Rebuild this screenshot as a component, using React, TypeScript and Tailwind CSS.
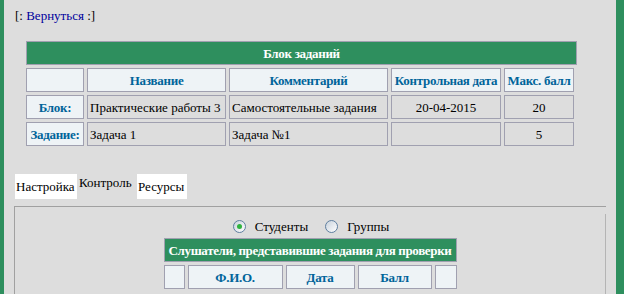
import React from "react";

function HeadCell({ children }: { children?: React.ReactNode }) {
  return (
    <div className="h-[24px] border border-[#a0a0b0] bg-[#eef3f6] flex items-center justify-center font-bold tracking-[-0.3px] text-[#00649a] whitespace-nowrap">
      {children}
    </div>
  );
}

function DataCell({
  children,
  center,
}: {
  children?: React.ReactNode;
  center?: boolean;
}) {
  return (
    <div
      className={`h-[24px] border border-[#a0a0b0] flex items-center whitespace-nowrap overflow-hidden ${
        center ? "justify-center" : "px-[2px]"
      }`}
    >
      {children}
    </div>
  );
}

function Radio({ checked }: { checked?: boolean }) {
  return (
    <span className="w-[13px] h-[13px] rounded-full border border-[#5f7fa0] bg-gradient-to-br from-[#c9d2dc] to-[#ffffff] flex items-center justify-center">
      {checked && <span className="w-[5px] h-[5px] rounded-full bg-[#2fb33f]" />}
    </span>
  );
}

export default function App() {
  return (
    <div className="min-h-[294px] bg-[#dddddd] flex text-[13px] leading-[15px] text-black font-['Liberation_Serif','Times_New_Roman',serif]">
      <div className="w-[4px] bg-[#2e8f5e] shrink-0" />
      <div className="flex-1 pt-[8px]">
        <div className="pl-[11px]">
          [: <a className="text-[#00009c]">Вернуться</a> :]
        </div>

        {/* Блок заданий */}
        <div className="ml-[22px] mt-[18px]">
          <div className="w-[551px] h-[24px] border border-[#a0a0b0] bg-[#2e8f5e] text-white font-bold tracking-[-0.3px] flex items-center justify-center mb-[3px]">
            Блок заданий
          </div>
          <div className="grid grid-cols-[58px_139px_159px_110px_70px] gap-[3px]">
            <HeadCell />
            <HeadCell>Название</HeadCell>
            <HeadCell>Комментарий</HeadCell>
            <HeadCell>Контрольная дата</HeadCell>
            <HeadCell>Макс. балл</HeadCell>

            <HeadCell>Блок:</HeadCell>
            <DataCell>Практические работы 3</DataCell>
            <DataCell>Самостоятельные задания</DataCell>
            <DataCell center>20-04-2015</DataCell>
            <DataCell center>20</DataCell>

            <HeadCell>Задание:</HeadCell>
            <DataCell>Задача 1</DataCell>
            <DataCell>Задача №1</DataCell>
            <DataCell center />
            <DataCell center>5</DataCell>
          </div>
        </div>

        {/* Вкладки */}
        <div className="ml-[11px] mt-[28px] flex items-start h-[25px]">
          <span className="bg-white w-[62px] h-[25px] pl-[1px] flex items-center">Настройка</span>
          <span className="w-[60px] h-[25px] pl-[2px] flex items-center -mt-[4px]">Контроль</span>
          <span className="bg-white w-[50px] h-[25px] pl-[1px] flex items-center">Ресурсы</span>
        </div>

        <div className="ml-[10px] mr-[10px] mt-[7px] border-t border-l border-[#a0a0a0] flex h-[89px] overflow-hidden">
          <div className="flex-1 flex flex-col items-center pt-[11px]">
            <div className="flex items-center h-[16px] ml-[2px]">
              <Radio checked />
              <span className="ml-[9px]">Студенты</span>
              <span className="ml-[17px]">
                <Radio />
              </span>
              <span className="ml-[9px]">Группы</span>
            </div>
            <div className="mt-[4px] w-[293px]">
              <div className="h-[24px] border border-[#a0a0b0] bg-[#2e8f5e] text-white font-bold tracking-[-0.35px] flex items-center justify-center mb-[3px] whitespace-nowrap">
                Слушатели, представившие задания для проверки
              </div>
              <div className="grid grid-cols-[21px_95px_69px_74px_22px] gap-[3px]">
                <HeadCell />
                <HeadCell>Ф.И.О.</HeadCell>
                <HeadCell>Дата</HeadCell>
                <HeadCell>Балл</HeadCell>
                <HeadCell />
              </div>
            </div>
          </div>
          <div className="w-px bg-[#b4b4b4] mt-[7px]" />
        </div>
      </div>
      <div className="w-[8px] bg-[#2e8f5e] shrink-0" />
    </div>
  );
}
